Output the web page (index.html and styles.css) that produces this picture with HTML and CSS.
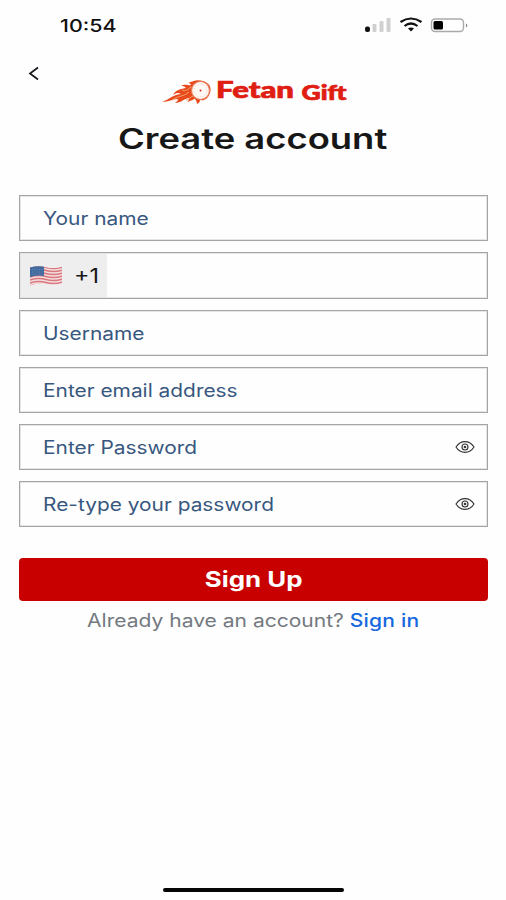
FILE: index.html
```html
<!DOCTYPE html>
<html lang="en">
<head>
<meta charset="utf-8">
<title>Create account</title>
<link rel="stylesheet" href="styles.css">
</head>
<body>
<main class="screen">
  <header class="status">
    <span class="time wide">10:54</span>
    <svg class="status-icons" width="106" height="20" viewBox="0 0 106 20">
      <g fill="#d0d0d0"><rect x="9.500" y="9" width="4" height="8" rx="1"/><rect x="16.500" y="6" width="4" height="11" rx="1"/><rect x="23.500" y="3" width="4" height="14" rx="1"/></g>
      <rect x="2" y="11.500" width="5" height="5.500" rx="2" fill="#111"/>
      <g fill="none" stroke="#111" stroke-width="2.200"><path d="M37.500 7Q48 0 58.500 7"/><path d="M41.500 11Q48 6 54.500 11"/></g>
      <path d="M45 13.600Q48 11.500 51 13.600L48 16.500Z" fill="#111"/>
      <rect x="68.500" y="4" width="32" height="12.500" rx="3.500" fill="none" stroke="#aaa" stroke-width="1.400"/>
      <rect x="70.500" y="6" width="9.500" height="8.500" rx="1.500" fill="#000"/>
      <path d="M103 8.500Q105.500 10.300 103 12.500Z" fill="#777"/>
    </svg>
  </header>
  <nav class="topbar">
    <svg class="back" width="12" height="15" viewBox="0 0 12 15"><path d="M10 1.500L2 7.500L10 13.500" fill="none" stroke="#15151c" stroke-width="1.700"/></svg>
    <svg class="logo" width="188" height="30" viewBox="0 0 188 30">
      <path d="M1 24C9 21 11 17 20 16C17 14 15 15 12 17C15 11 21 11 25 10C23 8 22 8 20 8C24 5 28 8 30 7C29 5 28 5 27 5C32 3 36 1 42 3C48 5 51 9 49 15C47 21 43 23 39 22C39 24 38 25 36 26C36 24 35 22 34 21C32 21 31 23 26 24C28 22 28 21 28 20C22 21 20 25 14 25C16 24 17 22 17 21C11 21 8 24 1 24Z" fill="#e84a1c"/>
      <path d="M11 22C19 17 22 19 28 14M21 12C25 14 27 11 30 9M25 22C29 21 29 19 32 18" fill="none" stroke="#f5a36e" stroke-width="1"/>
      <circle cx="39.500" cy="12.500" r="9" fill="#fff8f5" stroke="#e9805f" stroke-width="1.200"/>
      <circle cx="39.500" cy="12.500" r="6.500" fill="none" stroke="#f5c5b5" stroke-width=".7" stroke-dasharray="1.500 1.500"/>
      <circle cx="39.500" cy="12.500" r="1" fill="#d52b1c"/>
      <g class="brand"><text x="55" y="20" font-size="22" textLength="78" lengthAdjust="spacingAndGlyphs">Fetan</text><text x="140.500" y="21.500" font-size="20" textLength="45" lengthAdjust="spacingAndGlyphs">Gift</text></g>
    </svg>
  </nav>
  <h1 class="title"><span class="wide">Create account</span></h1>
  <form class="form">
    <div class="field"><span class="label wide">Your name</span></div>
    <div class="field phone">
      <div class="code">
        <svg width="32" height="20" viewBox="0 0 32 20">
          <clipPath id="wave"><path d="M0 1.500Q8-.8 16 1.200T32 .8V17.500Q24 19.500 16 18T0 19.500Z"/></clipPath>
          <g clip-path="url(#wave)"><rect width="32" height="20" fill="#f4dfe1"/>
          <g fill="none" stroke="#d9777c" stroke-width="1.500"><path d="M0 2Q8-.5 16 1.500T32 1.200"/><path d="M0 5Q8 2.500 16 4.500T32 4.200"/><path d="M0 8Q8 5.500 16 7.500T32 7.200"/><path d="M0 11Q8 8.500 16 10.500T32 10.200"/><path d="M0 14Q8 11.500 16 13.500T32 13.200"/><path d="M0 17Q8 14.500 16 16.500T32 16.200"/><path d="M0 20Q8 17.500 16 19.500T32 19.200"/></g>
          <path d="M0 0H14V10Q7 8.500 0 11Z" fill="#426b9f"/><path d="M2 3.500H13M2 6H13M2 8.300H13" stroke="#7896c0" stroke-width=".6" stroke-dasharray="1 1.300"/></g>
        </svg>
        <span class="dial wide">+1</span>
      </div>
    </div>
    <div class="field"><span class="label wide">Username</span></div>
    <div class="field"><span class="label wide">Enter email address</span></div>
    <div class="field"><span class="label wide">Enter Password</span>
      <svg class="eye" width="20" height="14" viewBox="0 0 20 14"><path d="M1 7C5.500-.2 14.500-.2 19 7C14.500 14.200 5.500 14.200 1 7Z"/><circle cx="10" cy="7" r="3"/><circle cx="10" cy="7" r=".8"/></svg></div>
    <div class="field"><span class="label wide">Re-type your password</span>
      <svg class="eye" width="20" height="14" viewBox="0 0 20 14"><path d="M1 7C5.500-.2 14.500-.2 19 7C14.500 14.200 5.500 14.200 1 7Z"/><circle cx="10" cy="7" r="3"/><circle cx="10" cy="7" r=".8"/></svg></div>
    <button class="submit" type="button"><span class="wide">Sign Up</span></button>
  </form>
  <p class="signin"><span class="wide">Already have an account? <a>Sign in</a></span></p>
  <div class="home"></div>
</main>
</body>
</html>
```
FILE: styles.css
```css
* { box-sizing: border-box; }
body { margin: 0; background: #fefefe; font-family: Inter, "Liberation Sans", sans-serif; }
.screen { width: 506px; height: 900px; display: flex; flex-direction: column; }
.wide { display: inline-block; white-space: nowrap; transform: scaleX(1.18); }
.status { height: 50px; display: flex; justify-content: space-between; padding: 15px 37px 0 60px; }
.time { font-size: 17px; line-height: 22px; font-weight: 500; color: #111; transform: scaleX(1.26); transform-origin: left; }
.topbar { height: 60px; display: flex; padding-left: 28px; }
.back { margin-top: 16px; }
.logo { margin: 28px 0 0 121px; overflow: visible; }
.brand { font-family: Lato, sans-serif; font-weight: 900; fill: #df1d13; stroke: #df1d13; stroke-width: .7; stroke-linejoin: round; }
.title { margin: 7px 0 0; height: 78px; text-align: center; font-size: 28px; line-height: 44px; font-weight: 600; color: #171717; }
.title .wide { transform: scaleX(1.3); }
.form { padding: 0 18px 0 19px; display: flex; flex-direction: column; gap: 11px; }
.field { height: 46px; border: 1px solid #a5a5a5; outline: 1px solid #e5e5e5; outline-offset: -2px; display: flex; align-items: center; justify-content: space-between; padding: 0 12px 0 23px; }
.label { font-size: 18px; color: #38577f; transform-origin: left; transform: scaleX(1.16); }
.phone { height: 47px; padding: 0; }
.code { width: 87px; height: 45px; background: #eee; display: flex; align-items: center; padding-left: 10px; gap: 12px; }
.dial { font-size: 20px; color: #171717; transform-origin: left; transform: scaleX(1.17); }
.eye { fill: none; stroke: #333; stroke-width: 1.1; }
.submit { margin-top: 20px; height: 43px; border: 0; border-radius: 4px; background: #c80000; color: #fff; font: 700 21px Inter, sans-serif; }
.submit .wide { transform: scaleX(1.23); }
.signin { margin: 8px 0 0 1px; text-align: center; font-size: 18px; line-height: 24px; color: #747980; }
.signin .wide { transform: scaleX(1.168); }
.signin a { color: #1668de; font-weight: 500; letter-spacing: .2px; }
.home { width: 181px; height: 4px; margin: auto auto 8px 163px; background: #050505; border-radius: 2px; }
```
